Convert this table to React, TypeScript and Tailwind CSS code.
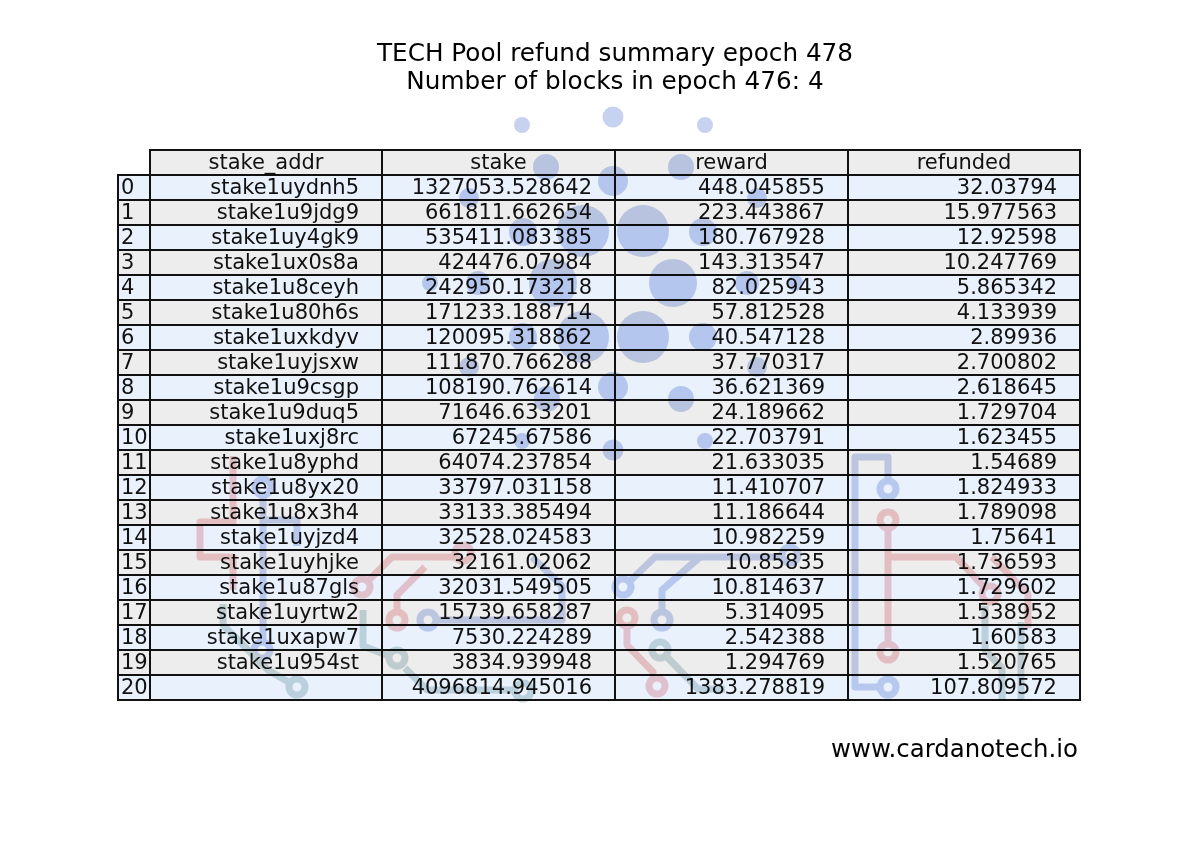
import React from "react";

const rows: string[][] = [
  ["stake1uydnh5", "1327053.528642", "448.045855", "32.03794"],
  ["stake1u9jdg9", "661811.662654", "223.443867", "15.977563"],
  ["stake1uy4gk9", "535411.083385", "180.767928", "12.92598"],
  ["stake1ux0s8a", "424476.07984", "143.313547", "10.247769"],
  ["stake1u8ceyh", "242950.173218", "82.025943", "5.865342"],
  ["stake1u80h6s", "171233.188714", "57.812528", "4.133939"],
  ["stake1uxkdyv", "120095.318862", "40.547128", "2.89936"],
  ["stake1uyjsxw", "111870.766288", "37.770317", "2.700802"],
  ["stake1u9csgp", "108190.762614", "36.621369", "2.618645"],
  ["stake1u9duq5", "71646.633201", "24.189662", "1.729704"],
  ["stake1uxj8rc", "67245.67586", "22.703791", "1.623455"],
  ["stake1u8yphd", "64074.237854", "21.633035", "1.54689"],
  ["stake1u8yx20", "33797.031158", "11.410707", "1.824933"],
  ["stake1u8x3h4", "33133.385494", "11.186644", "1.789098"],
  ["stake1uyjzd4", "32528.024583", "10.982259", "1.75641"],
  ["stake1uyhjke", "32161.02062", "10.85835", "1.736593"],
  ["stake1u87gls", "32031.549505", "10.814637", "1.729602"],
  ["stake1uyrtw2", "15739.658287", "5.314095", "1.538952"],
  ["stake1uxapw7", "7530.224289", "2.542388", "1.60583"],
  ["stake1u954st", "3834.939948", "1.294769", "1.520765"],
  ["", "4096814.945016", "1383.278819", "107.809572"],
];

const headers = ["stake_addr", "stake", "reward", "refunded"];

const dots: [number, number, number][] = [
  [522, 125, 8], [613, 117, 10.5], [705, 125, 8],
  [546, 167, 13], [681, 167, 13],
  [613, 181, 15],
  [469, 198, 10], [757, 198, 10],
  [583, 231, 26], [643, 231, 26],
  [523, 232, 14], [703, 232, 14],
  [553, 283, 24], [673, 283, 24],
  [478, 283, 12], [747, 283, 12],
  [430, 283, 8], [795, 283, 8],
  [583, 337, 26], [643, 337, 26],
  [523, 337, 14], [703, 337, 14],
  [547, 399, 13], [681, 399, 13],
  [613, 387, 15],
  [469, 367, 10], [757, 367, 10],
  [522, 441, 8], [613, 450, 10.5], [705, 441, 8],
];

const BLUE = "#c9d4f1";
const RED = "#f5cdd0";
const TEAL = "#cddcdf";

function Ring({ x, y, c }: { x: number; y: number; c: string }) {
  return <circle cx={x} cy={y} r={8} fill="none" stroke={c} strokeWidth={7} />;
}

function Watermark() {
  const line = { fill: "none", strokeWidth: 7, strokeLinejoin: "round" as const };
  return (
    <svg
      className="absolute inset-0 pointer-events-none mix-blend-multiply"
      width={1200}
      height={843}
      viewBox="0 0 1200 843"
    >
      {dots.map(([x, y, r], i) => (
        <circle key={i} cx={x} cy={y} r={r} fill="#c6d2f0" />
      ))}
      {/* right blue bracket */}
      <path d="M888,481 V457 H855 V687 H880" stroke={BLUE} {...line} />
      <Ring x={888} y={489} c={BLUE} />
      <Ring x={888} y={687} c={BLUE} />
      {/* right red */}
      <path d="M888,528 V644" stroke={RED} {...line} />
      <Ring x={888} y={520} c={RED} />
      <Ring x={888} y={652} c={RED} />
      <path d="M888,557 H956 L985,588" stroke={RED} {...line} />
      <Ring x={990} y={594} c={RED} />
      <path d="M992,557 L1028,594 V628" stroke={RED} {...line} />
      {/* right teal */}
      <path d="M985,606 V650 L1002,668 V700" stroke={TEAL} {...line} />
      <path d="M1021,622 V700" stroke={TEAL} {...line} />
      {/* middle blue */}
      <path d="M629,582 L655,557 H782" stroke={BLUE} {...line} />
      <Ring x={623} y={587} c={BLUE} />
      <Ring x={790} y={555} c={BLUE} />
      <path d="M700,557 L662,590 V612" stroke={BLUE} {...line} />
      <Ring x={662} y={620} c={BLUE} />
      {/* middle red */}
      <path d="M627,626 V645 L653,672 V678" stroke={RED} {...line} />
      <Ring x={627} y={618} c={RED} />
      <Ring x={657} y={686} c={RED} />
      {/* middle teal */}
      <path d="M666,656 L698,689 H725" stroke={TEAL} {...line} />
      <Ring x={660} y={650} c={TEAL} />
      {/* left-middle blue */}
      <path d="M436,620 H562 V586 L532,557" stroke={BLUE} {...line} />
      <Ring x={428} y={620} c={BLUE} />
      {/* left blue */}
      <path d="M263,495 V642" stroke={BLUE} {...line} />
      <path d="M263,520 H297 V546" stroke={BLUE} {...line} />
      <Ring x={263} y={487} c={BLUE} />
      <Ring x={262} y={650} c={BLUE} />
      {/* left red */}
      <path d="M233,456 V522 H200 V557 H233 V590" stroke={RED} {...line} />
      <path d="M368,581 L392,557 H455" stroke={RED} {...line} />
      <Ring x={362} y={587} c={RED} />
      <Ring x={463} y={553} c={RED} />
      <path d="M397,612 V595 L425,567" stroke={RED} {...line} />
      <Ring x={397} y={620} c={RED} />
      {/* left teal */}
      <path d="M223,604 V625 L268,670 L290,683" stroke={TEAL} {...line} />
      <Ring x={297} y={687} c={TEAL} />
      <path d="M363,610 V646 L389,656" stroke={TEAL} {...line} />
      <Ring x={397} y={658} c={TEAL} />
      <path d="M405,668 L427,690 H515" stroke={TEAL} {...line} />
      <Ring x={523} y={691} c={TEAL} />
    </svg>
  );
}

export default function App() {
  return (
    <div className="relative w-[1200px] h-[843px] bg-white overflow-hidden font-['DejaVu_Sans',sans-serif] text-black">
      <div className="pt-[39px] pl-[30px] text-center text-[24.7px] leading-[28px] whitespace-nowrap">
        <div>TECH Pool refund summary epoch 478</div>
        <div>Number of blocks in epoch 476: 4</div>
      </div>

      <div className="mt-[54px] ml-[117px] w-fit">
        <div className="grid grid-cols-[30px_230px_231px_231px_230px] gap-[2px] p-[2px] bg-[#111111] text-[21px] leading-[23px] text-[#111111]">
          <div className="-mt-[2px] -ml-[2px] bg-white" />
          {headers.map((h) => (
            <div key={h} className="h-[23px] bg-[#ededed] flex items-center justify-center whitespace-nowrap">
              {h}
            </div>
          ))}
          {rows.map((r, i) => {
            const bg = i % 2 === 0 ? "bg-[#e9f1fd]" : "bg-[#ededed]";
            return (
              <React.Fragment key={i}>
                <div className={`${bg} h-[23px] flex items-center pl-[2px] whitespace-nowrap`}>{i}</div>
                {r.map((c, j) => (
                  <div key={j} className={`${bg} h-[23px] flex items-center justify-end pr-[22px] whitespace-nowrap`}>
                    {c}
                  </div>
                ))}
              </React.Fragment>
            );
          })}
        </div>
      </div>

      <div className="mt-[34px] pr-[122px] text-right text-[24.4px] leading-[28px]">www.cardanotech.io</div>

      <Watermark />
    </div>
  );
}
